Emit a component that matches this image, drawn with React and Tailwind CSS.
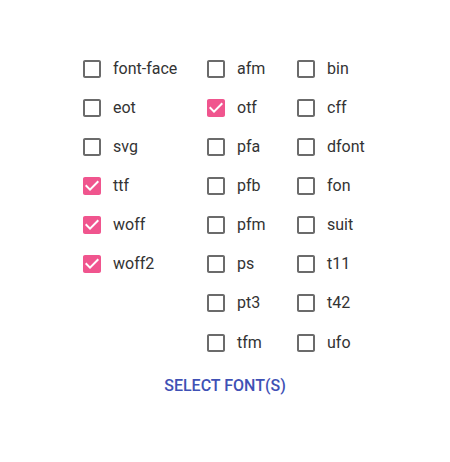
import React from "react";

const columns = [
  { width: "w-[124px]", items: [["font-face", false], ["eot", false], ["svg", false], ["ttf", true], ["woff", true], ["woff2", true]] },
  { width: "w-[90px]", items: [["afm", false], ["otf", true], ["pfa", false], ["pfb", false], ["pfm", false], ["ps", false], ["pt3", false], ["tfm", false]] },
  { width: "w-[70px]", items: [["bin", false], ["cff", false], ["dfont", false], ["fon", false], ["suit", false], ["t11", false], ["t42", false], ["ufo", false]] },
];

function Box({ checked }) {
  return checked ? (
    <svg width="24" height="24" viewBox="0 0 24 24" className="shrink-0 text-[#f0558e]">
      <path
        fill="currentColor"
        d="M19 3H5c-1.11 0-2 .9-2 2v14c0 1.1.89 2 2 2h14c1.11 0 2-.9 2-2V5c0-1.1-.89-2-2-2zm-9 14l-5-5 1.41-1.41L10 14.17l7.59-7.59L19 8l-9 9z"
      />
    </svg>
  ) : (
    <svg width="24" height="24" viewBox="0 0 24 24" className="shrink-0 text-[#6b6b6b]">
      <path
        fill="currentColor"
        d="M19 5v14H5V5h14m0-2H5c-1.1 0-2 .9-2 2v14c0 1.1.9 2 2 2h14c1.1 0 2-.9 2-2V5c0-1.1-.9-2-2-2z"
      />
    </svg>
  );
}

export default function App() {
  return (
    <div className="w-[450px] h-[462px] bg-white pt-[49px] font-['Roboto',sans-serif]">
      <div className="flex pl-[80px]">
        {columns.map((col, i) => (
          <div key={i} className={col.width}>
            {col.items.map(([label, checked]) => (
              <div key={label} className="h-[39.15px] flex items-center gap-[9px]">
                <Box checked={checked} />
                <span className="text-[16px] text-[#333333]">{label}</span>
              </div>
            ))}
          </div>
        ))}
      </div>
      <div className="flex justify-center mt-[6px]">
        <button className="px-2 py-1.5 text-[16px] leading-[24px] font-medium text-[#3f51b5] uppercase">
          Select font(s)
        </button>
      </div>
    </div>
  );
}
